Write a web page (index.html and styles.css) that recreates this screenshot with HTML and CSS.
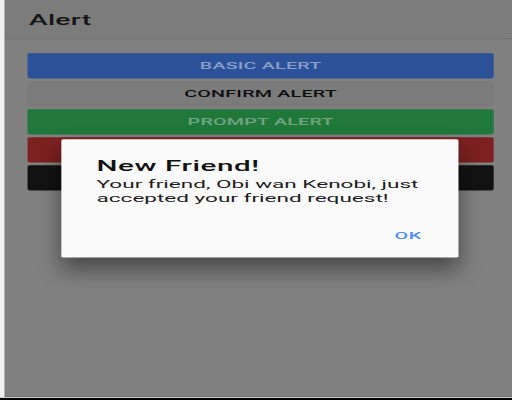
FILE: index.html
```html
<!DOCTYPE html>
<html>
<head>
<meta charset="utf-8">
<link rel="stylesheet" href="styles.css">
</head>
<body>
<div class="frame">
  <div class="edge"></div>
  <div class="viewport">
    <div class="app">
      <div class="header"><span class="title">Alert</span></div>
      <div class="content">
        <div class="btn btn-blue">BASIC ALERT</div>
        <div class="btn btn-light">CONFIRM ALERT</div>
        <div class="btn btn-green">PROMPT ALERT</div>
        <div class="btn btn-red"></div>
        <div class="btn btn-dark"></div>
      </div>
      <div class="dialog">
        <div class="dlg-title">New Friend!</div>
        <div class="dlg-msg">Your friend, Obi wan Kenobi, just accepted your friend request!</div>
        <div class="dlg-actions"><span class="ok">OK</span></div>
      </div>
    </div>
  </div>
</div>
</body>
</html>
```
FILE: styles.css
```css
html, body {
  margin: 0;
  padding: 0;
}
body {
  width: 512px;
  height: 400px;
  background: #000;
  font-family: Roboto, "Liberation Sans", Arial, sans-serif;
  overflow: hidden;
}
.frame {
  display: flex;
  height: 397px;
  border-bottom: 1px solid #cfcfcf;
}
.edge {
  width: 5px;
  background: #f1f1f1;
  border-right: 1px solid #b4b4b4;
  box-sizing: border-box;
}
.viewport {
  width: 507px;
  height: 397px;
  overflow: hidden;
  position: relative;
}
.app {
  width: 360px;
  height: 567px;
  background: #808080;
  transform: scale(1.4083, 0.7);
  transform-origin: 0 0;
  position: relative;
  display: flex;
  flex-direction: column;
}
.header {
  height: 55px;
  background: #7c7c7c;
  border-bottom: 1px solid #6c6c6c;
  display: flex;
  align-items: center;
  padding-left: 17px;
}
.title {
  font-size: 20px;
  font-weight: 500;
  color: #151515;
  letter-spacing: 0.2px;
}
.content {
  padding: 20px 13px 0 16px;
  display: flex;
  flex-direction: column;
  gap: 4px;
}
.btn {
  height: 36px;
  border-radius: 2px;
  display: flex;
  align-items: center;
  justify-content: center;
  font-size: 14px;
  font-weight: 500;
  letter-spacing: 0.15px;
}
.btn-blue { background: #2b5199; color: #8a9fc8; }
.btn-light { background: #7b7b7b; color: #0e0e0e; }
.btn-green { background: #21783b; color: #70a680; }
.btn-red { background: #7c2020; }
.btn-dark { background: #121212; }
.dialog {
  position: absolute;
  left: 40px;
  top: 199px;
  width: 282px;
  height: 169px;
  box-sizing: border-box;
  background: #fafafa;
  border-radius: 2px;
  box-shadow: 0 16px 22px rgba(0,0,0,0.45);
  padding: 25px 24px 0 25px;
  display: flex;
  flex-direction: column;
}
.dlg-title {
  font-size: 21px;
  font-weight: 500;
  color: #111;
  line-height: 26px;
  letter-spacing: 0.4px;
}
.dlg-msg {
  font-size: 16px;
  color: #1c1c1c;
  line-height: 21px;
  margin-top: 2px;
}
.dlg-actions {
  display: flex;
  justify-content: flex-end;
  margin-top: auto;
  padding: 0 0 23px 0;
}
.ok {
  font-size: 14px;
  font-weight: 500;
  color: #4b8df2;
  letter-spacing: 0.5px;
  padding: 0 2px;
}
```
